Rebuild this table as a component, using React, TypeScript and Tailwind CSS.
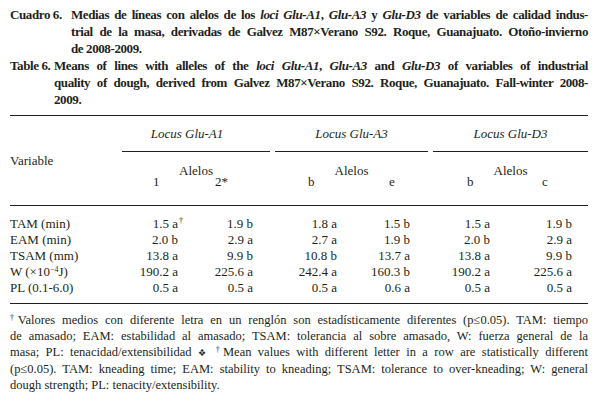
import { FC, ReactNode } from 'react';

const cols = 'grid grid-cols-[112px_74px_74px_5px_76px_77px_5px_77px_78px]';
const valuePad = ['pr-[18px]', 'pr-[17px]', 'pr-[14px]', 'pr-[18px]', 'pr-[20px]', 'pr-[16px]'];
const allelePad = ['pl-[31px]', 'pl-[19px]', 'pl-[33px]', 'pl-[38px]', 'pl-[34px]', 'pl-[32px]'];

const Line: FC<{ children: ReactNode; last?: boolean }> = ({ children, last }) => (
  <div className={last ? 'text-left' : 'text-justify [text-align-last:justify]'}>{children}</div>
);

const Caption: FC<{ label: string; width: string; lines: ReactNode[] }> = ({ label, width, lines }) => (
  <div className="flex">
    <span className={`${width} shrink-0`}>{label}</span>
    <div className="min-w-0 flex-1">
      {lines.map((l, i) => (
        <Line key={i} last={i === lines.length - 1}>
          {l}
        </Line>
      ))}
    </div>
  </div>
);

const rows: [ReactNode, string[]][] = [
  ['TAM (min)', ['1.5 a', '1.9 b', '1.8 a', '1.5 b', '1.5 a', '1.9 b']],
  ['EAM (min)', ['2.0 b', '2.9 a', '2.7 a', '1.9 b', '2.0 b', '2.9 a']],
  ['TSAM (mm)', ['13.8 a', '9.9 b', '10.8 b', '13.7 a', '13.8 a', '9.9 b']],
  [
    <>
      W (×10<sup className="text-[8px]">−4</sup>J)
    </>,
    ['190.2 a', '225.6 a', '242.4 a', '160.3 b', '190.2 a', '225.6 a'],
  ],
  ['PL (0.1-6.0)', ['0.5 a', '0.5 a', '0.5 a', '0.6 a', '0.5 a', '0.5 a']],
];

const Cell: FC<{ value: string; idx: number; dagger?: boolean }> = ({ value, idx, dagger }) => (
  <div className={`text-right ${valuePad[idx]}`}>
    <span className="relative">
      {value}
      {dagger && <span className="absolute left-full top-[1px] pl-[1px] text-[8px] leading-none">†</span>}
    </span>
  </div>
);

const Table: FC = () => (
  <div className="mt-[7px] text-[13px] leading-[16px]">
    <div className={`${cols} border-y border-[#231f20]`}>
      <div className="col-start-1 row-span-3 row-start-1 flex items-center">Variable</div>
      <div className="col-span-2 col-start-2 row-start-1 flex h-[36px] items-center justify-center border-b border-[#231f20] pr-[18px] italic">
        Locus Glu-A1
      </div>
      <div className="col-span-2 col-start-5 row-start-1 flex h-[36px] items-center justify-center border-b border-[#231f20] italic">
        Locus Glu-A3
      </div>
      <div className="col-span-2 col-start-8 row-start-1 flex h-[36px] items-center justify-center border-b border-[#231f20] italic">
        Locus Glu-D3
      </div>
      {['col-start-2', 'col-start-5', 'col-start-8'].map((c) => (
        <div key={c} className={`${c} col-span-2 row-start-2 pt-[12px] text-center leading-[14px]`}>
          Alelos
        </div>
      ))}
      {['1', '2*', 'b', 'e', 'b', 'c'].map((a, i) => (
        <div
          key={i}
          className={`${['col-start-2', 'col-start-3', 'col-start-5', 'col-start-6', 'col-start-8', 'col-start-9'][i]} row-start-3 h-[27px] leading-[8px] ${allelePad[i]}`}
        >
          {a}
        </div>
      ))}
    </div>
    <div className="border-b border-[#231f20] pb-[7px] pt-[10px]">
      {rows.map(([label, vals], r) => (
        <div key={r} className={cols}>
          <div>{label}</div>
          <Cell value={vals[0]} idx={0} dagger={r === 0} />
          <Cell value={vals[1]} idx={1} />
          <div />
          <Cell value={vals[2]} idx={2} />
          <Cell value={vals[3]} idx={3} />
          <div />
          <Cell value={vals[4]} idx={4} />
          <Cell value={vals[5]} idx={5} />
        </div>
      ))}
    </div>
  </div>
);

const App: FC = () => (
  <div className="h-[404px] w-[601px] overflow-hidden bg-white font-serif text-[#231f20]">
    <div className="pl-[10px] pr-[13px] pt-[6px] font-[Liberation_Serif]">
      <div className="text-[13px] font-bold leading-[17px] tracking-[-0.4px]">
        <Caption
          label="Cuadro 6."
          width="w-[61px]"
          lines={[
            <>
              Medias de líneas con alelos de los <i>loci Glu-A1</i>, <i>Glu-A3</i> y <i>Glu-D3</i> de variables de
              calidad indus-
            </>,
            'trial de la masa, derivadas de Galvez M87×Verano S92. Roque, Guanajuato. Otoño-invierno',
            'de 2008-2009.',
          ]}
        />
        <Caption
          label="Table 6."
          width="w-[44px]"
          lines={[
            <>
              Means of lines with alleles of the <i>loci Glu-A1</i>, <i>Glu-A3</i> and <i>Glu-D3</i> of variables of
              industrial
            </>,
            'quality of dough, derived from Galvez M87×Verano S92. Roque, Guanajuato. Fall-winter 2008-',
            '2009.',
          ]}
        />
      </div>
      <Table />
      <div className="pt-[8px] text-[12.5px] leading-[16px]">
        <Line>
          <sup className="text-[8px]">†</sup>Valores medios con diferente letra en un renglón son estadísticamente
          diferentes (p≤0.05). TAM: tiempo
        </Line>
        <Line>de amasado; EAM: estabilidad al amasado; TSAM: tolerancia al sobre amasado, W: fuerza general de la</Line>
        <Line>
          masa; PL: tenacidad/extensibilidad <span className="font-sans text-[9px]">❖</span>{' '}
          <sup className="text-[8px]">†</sup>Mean values with different letter in a row are statistically different
        </Line>
        <Line>(p≤0.05). TAM: kneading time; EAM: stability to kneading; TSAM: tolerance to over-kneading; W: general</Line>
        <Line last>dough strength; PL: tenacity/extensibility.</Line>
      </div>
    </div>
  </div>
);

export default App;
